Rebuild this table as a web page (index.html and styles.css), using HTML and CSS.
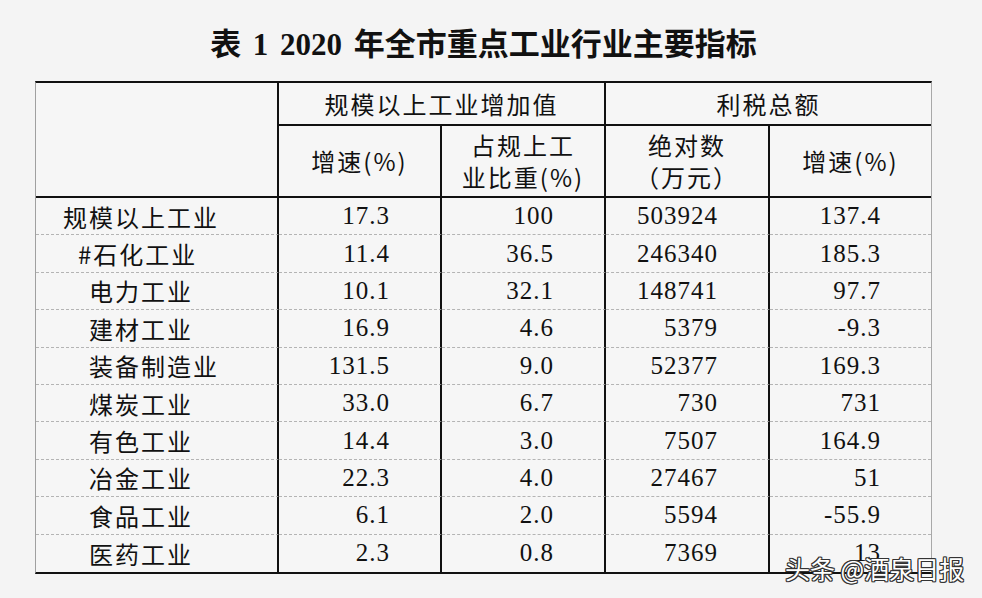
FILE: index.html
```html
<!DOCTYPE html>
<html lang="zh-CN">
<head>
<meta charset="utf-8">
<title>表1 2020年全市重点工业行业主要指标</title>
<link rel="stylesheet" href="styles.css">
</head>
<body>
<div class="page">
  <h1 class="title">表 1 2020 年全市重点工业行业主要指标</h1>
  <div class="table">
    <div class="cell corner"></div>
    <div class="cell group">规模以上工业增加值</div>
    <div class="cell group last">利税总额</div>
    <div class="cell sub">增速(%)</div>
    <div class="cell sub"><span>占规上工</span><span>业比重(%)</span></div>
    <div class="cell sub"><span>绝对数</span><span>（万元）</span></div>
    <div class="cell sub last">增速(%)</div>

    <div class="row"><div class="cell label main">规模以上工业</div><div class="cell num">17.3</div><div class="cell num">100</div><div class="cell num">503924</div><div class="cell num last">137.4</div></div>
    <div class="row"><div class="cell label hash">#石化工业</div><div class="cell num">11.4</div><div class="cell num">36.5</div><div class="cell num">246340</div><div class="cell num last">185.3</div></div>
    <div class="row"><div class="cell label">电力工业</div><div class="cell num">10.1</div><div class="cell num">32.1</div><div class="cell num">148741</div><div class="cell num last">97.7</div></div>
    <div class="row"><div class="cell label">建材工业</div><div class="cell num">16.9</div><div class="cell num">4.6</div><div class="cell num">5379</div><div class="cell num last">-9.3</div></div>
    <div class="row"><div class="cell label">装备制造业</div><div class="cell num">131.5</div><div class="cell num">9.0</div><div class="cell num">52377</div><div class="cell num last">169.3</div></div>
    <div class="row"><div class="cell label">煤炭工业</div><div class="cell num">33.0</div><div class="cell num">6.7</div><div class="cell num">730</div><div class="cell num last">731</div></div>
    <div class="row"><div class="cell label">有色工业</div><div class="cell num">14.4</div><div class="cell num">3.0</div><div class="cell num">7507</div><div class="cell num last">164.9</div></div>
    <div class="row"><div class="cell label">冶金工业</div><div class="cell num">22.3</div><div class="cell num">4.0</div><div class="cell num">27467</div><div class="cell num last">51</div></div>
    <div class="row"><div class="cell label">食品工业</div><div class="cell num">6.1</div><div class="cell num">2.0</div><div class="cell num">5594</div><div class="cell num last">-55.9</div></div>
    <div class="row"><div class="cell label">医药工业</div><div class="cell num">2.3</div><div class="cell num">0.8</div><div class="cell num">7369</div><div class="cell num last">13</div></div>
  </div>
  <div class="watermark">头条 @酒泉日报</div>
</div>
</body>
</html>
```
FILE: styles.css
```css
html, body {
  margin: 0;
  padding: 0;
  background: #f4f4f4;
}

body {
  font-family: "Noto Sans CJK SC", "Noto Sans", sans-serif;
  color: #111;
}

.page {
  position: relative;
  width: 982px;
  height: 598px;
  box-sizing: border-box;
  padding: 25px 0 0 35px;
}

.title {
  width: 897px;
  margin: 0 0 16px 0;
  height: 40px;
  line-height: 40px;
  text-align: center;
  font-family: "Liberation Serif", "Noto Sans CJK SC", serif;
  font-weight: 700;
  font-size: 31px;
  word-spacing: 4px;
  color: #111;
}

.table {
  display: grid;
  width: 897px;
  box-sizing: border-box;
  grid-template-columns: 243px 163px 164px 164px 161px;
  grid-template-rows: 43px 72px repeat(10, 37.4px);
  border-top: 2px solid #111;
  border-bottom: 2px solid #111;
  border-left: 1px solid #a0a0a0;
  border-right: 1px solid #a8a8a8;
  background: #f6f6f6;
}

.row {
  display: contents;
}

.cell {
  box-sizing: border-box;
  border-right: 2px solid #111;
  display: flex;
  align-items: center;
  font-size: 24px;
  letter-spacing: 2px;
  white-space: nowrap;
}

.cell.last {
  border-right: none;
}

.corner {
  grid-row: span 2;
  border-bottom: 2px solid #111;
}

.group {
  grid-column: span 2;
  justify-content: center;
  border-bottom: 2px solid #111;
}

.sub {
  flex-direction: column;
  justify-content: center;
  border-bottom: 2px solid #111;
  line-height: 32px;
}

.row:not(:last-child) .cell {
  border-bottom: 1px dashed #b4b4b4;
}

.label {
  padding-left: 53px;
}

.label.main {
  padding-left: 27px;
}

.label.hash {
  padding-left: 42px;
}

.num {
  justify-content: flex-end;
  padding-right: 50px;
  font-family: "Liberation Serif", serif;
  font-size: 25px;
  letter-spacing: 1px;
}

.watermark {
  position: absolute;
  left: 785px;
  top: 553px;
  font-size: 25px;
  line-height: 30px;
  letter-spacing: 0;
  color: #fff;
  white-space: nowrap;
  text-shadow:
    1px 0 0 #333, -1px 0 0 #333, 0 1px 0 #333, 0 -1px 0 #333,
    1px 1px 0 #333, -1px -1px 0 #333, 1px -1px 0 #333, -1px 1px 0 #333;
}
```
